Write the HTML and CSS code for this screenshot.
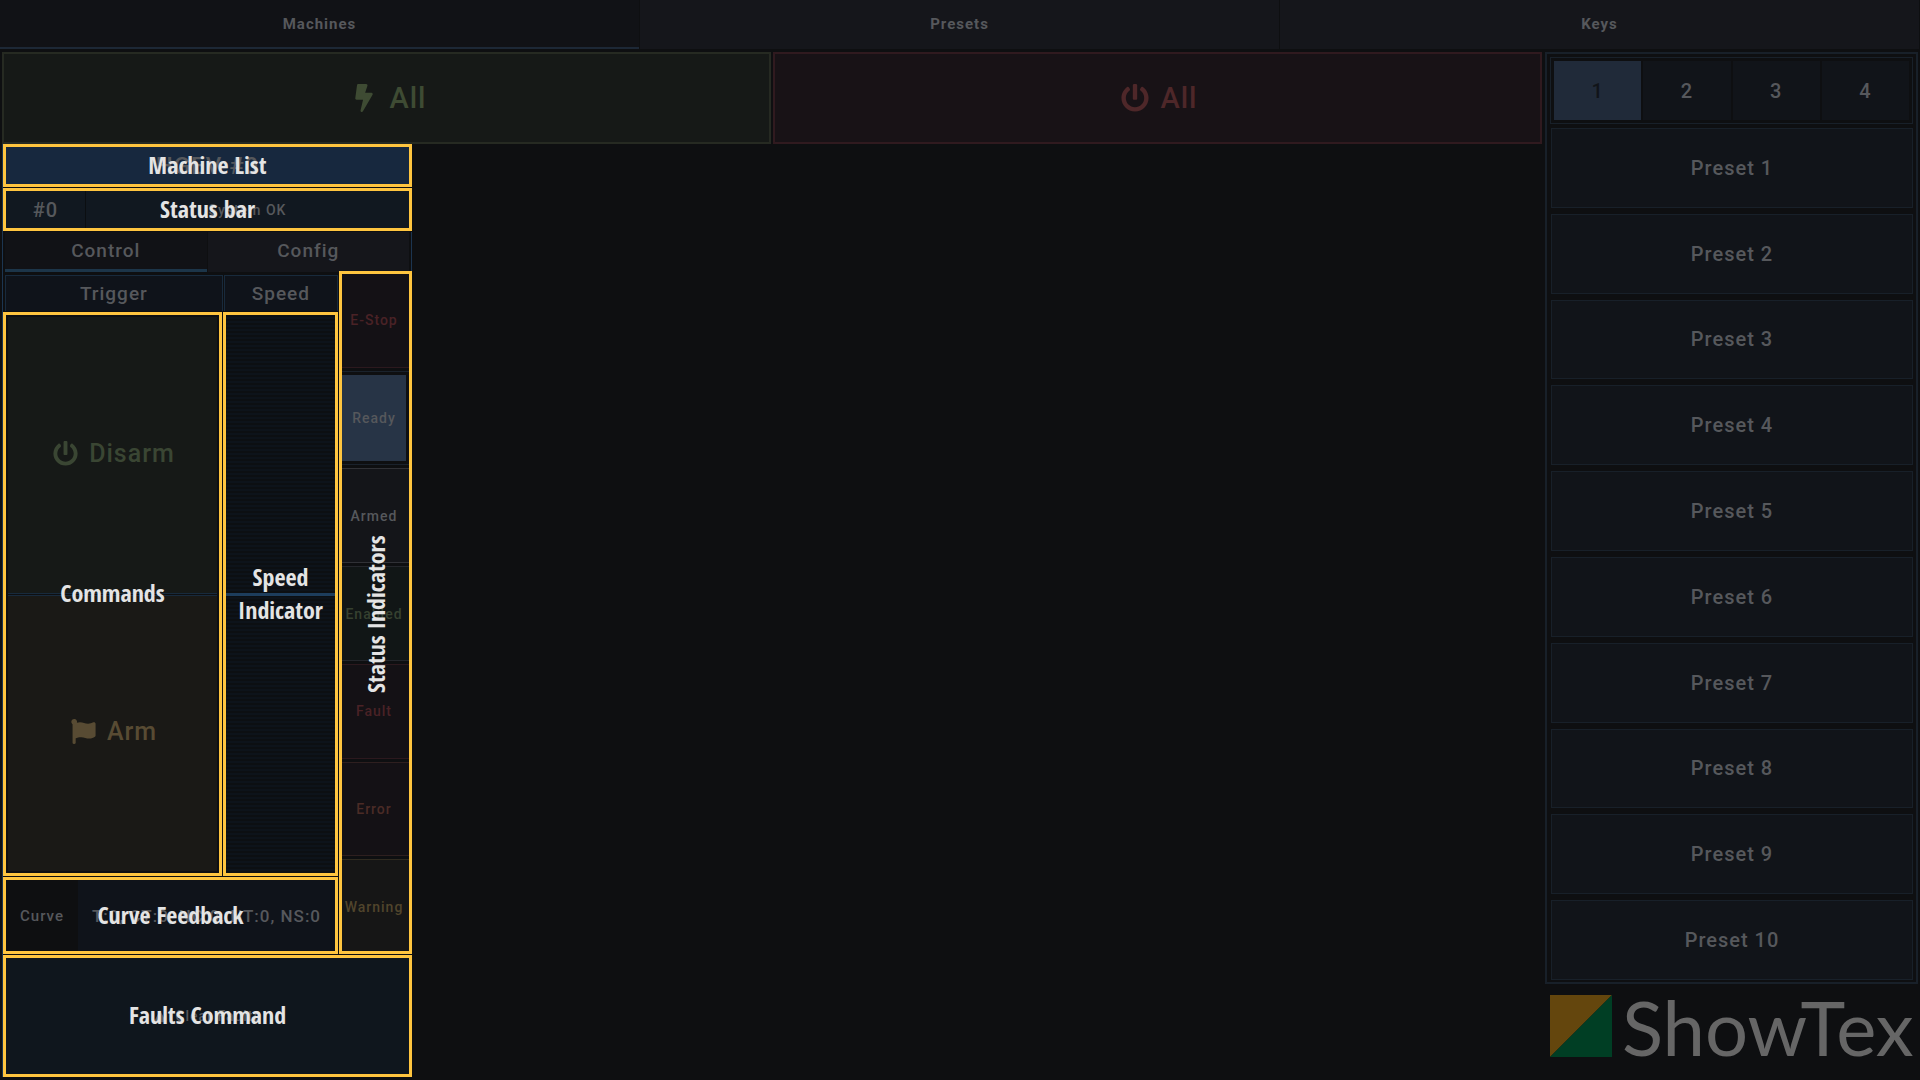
FILE: index.html
```html
<!DOCTYPE html>
<html lang="en">
<head>
    <meta charset="UTF-8">
    <meta name="viewport" content="width=device-width, initial-scale=1.0">
    <title>Machines</title>
    <link rel="stylesheet" href="styles.css">
</head>
<body>
    <nav class="main-tabs">
        <button class="main-tab active">Machines</button>
        <button class="main-tab">Presets</button>
        <button class="main-tab">Keys</button>
    </nav>

    <div class="layout">
        <main class="machines">
            <div class="all-buttons">
                <button class="all-button enable-all">
                    <svg class="icon-bolt" viewBox="0 0 320 512"><path d="M296 160H180.600l42.600-129.800C227.200 15 215.700 0 200 0H56C44 0 33.800 8.900 32.200 20.800l-32 240C-1.700 275.200 9.500 288 24 288h118.700L96.600 482.500c-3.600 15.200 8 29.500 23.300 29.500 8.400 0 16.400-4.400 20.800-12l176-304c9.300-15.900-2.200-36-20.700-36z"/></svg>
                    All
                </button>
                <button class="all-button disable-all">
                    <svg class="icon" viewBox="0 0 512 512"><use href="#power"/></svg>
                    All
                </button>
            </div>

            <section class="machine">
                <div class="machine-name"><span>HGEV #0</span><span class="note">Machine List</span></div>
                <div class="status-bar">
                    <span class="machine-id">#0</span>
                    <span class="system-state">System OK</span>
                    <span class="note">Status bar</span>
                </div>
                <div class="machine-tabs">
                    <button class="machine-tab active">Control</button>
                    <button class="machine-tab">Config</button>
                </div>
                <div class="control">
                    <div class="control-main">
                        <div class="control-heads">
                            <div class="control-head">Trigger</div>
                            <div class="control-head">Speed</div>
                        </div>
                        <div class="control-body">
                            <div class="commands">
                                <button class="command disarm">
                                    <svg class="icon" viewBox="0 0 512 512"><path id="power" d="M400 54.100c63 45 104 118.600 104 201.900 0 136.800-110.800 247.700-247.500 248C120 504.300 8.200 393 8 256.400 7.900 173.100 48.900 99.300 111.800 54.200c11.700-8.300 28-4.800 35 7.700L162.600 90c5.900 10.500 3.100 23.800-6.600 31-41.500 30.800-68 79.600-68 134.900-.1 92.300 74.500 168.100 168 168.100 91.600 0 168.600-74.200 168-169.100-.3-51.800-24.700-101.800-68.100-134-9.700-7.200-12.400-20.500-6.500-30.900l15.800-28.100c7-12.400 23.200-16.100 34.800-7.800zM296 264V24c0-13.300-10.700-24-24-24h-32c-13.300 0-24 10.700-24 24v240c0 13.300 10.700 24 24 24h32c13.300 0 24-10.700 24-24z"/></svg>
                                    Disarm
                                </button>
                                <button class="command arm">
                                    <svg class="icon" viewBox="0 0 512 512"><path d="M349.600 94.900C289 94.900 245 65.800 183.100 65.800c-23 0-43.500 4-62.500 10.900a56 56 0 0 0 2.200-28.300C118.600 24.300 98.700 4.700 74.400.8 38.200-5.100 7 22.800 7 58c0 20.700 9.500 37.200 25 47.400V488c0 13.300 10.700 24 24 24h16c13.300 0 24-10.700 24-24v-94.400c28.300-12.100 63.600-22.100 114.400-22.100 60.600 0 104.600 29.200 166.500 29.200 44.300 0 79.600-15 112.500-37.500a32 32 0 0 0 14.100-26.700V96c0-23.400-24.200-38.700-45.500-28.900-34.400 16-68.700 27.800-108.400 27.800z"/></svg>
                                    Arm
                                </button>
                                <span class="note">Commands</span>
                            </div>
                            <div class="speed"><span class="note">Speed Indicator</span></div>
                        </div>
                        <div class="curve">
                            <span class="curve-label">Curve</span>
                            <span class="curve-value">T:0, CT:0, NC:0, NT:0, NS:0</span>
                            <span class="note">Curve Feedback</span>
                        </div>
                    </div>
                    <div class="indicators">
                        <div class="indicator estop">E-Stop</div>
                        <div class="indicator ready">Ready</div>
                        <div class="indicator armed">Armed</div>
                        <div class="indicator enabled">Enabled</div>
                        <div class="indicator fault">Fault</div>
                        <div class="indicator error">Error</div>
                        <div class="indicator warning">Warning</div>
                        <span class="note note-vertical">Status Indicators</span>
                    </div>
                </div>
                <button class="faults">
                    <svg class="icon-small" viewBox="0 0 16 16"><path d="M8 1l7 14H1z"/></svg>
                    Clear Faults
                    <span class="note">Faults Command</span>
                </button>
            </section>
        </main>

        <aside class="sidebar">
            <div class="presets">
                <div class="pages">
                    <button class="page active">1</button>
                    <button class="page">2</button>
                    <button class="page">3</button>
                    <button class="page">4</button>
                </div>
                <div class="preset-list">
                    <button class="preset">Preset 1</button>
                    <button class="preset">Preset 2</button>
                    <button class="preset">Preset 3</button>
                    <button class="preset">Preset 4</button>
                    <button class="preset">Preset 5</button>
                    <button class="preset">Preset 6</button>
                    <button class="preset">Preset 7</button>
                    <button class="preset">Preset 8</button>
                    <button class="preset">Preset 9</button>
                    <button class="preset">Preset 10</button>
                </div>
            </div>
            <div class="brand">
                <svg class="brand-mark" viewBox="0 0 62 62"><path fill="#64460d" d="M0 0h62L0 62z"/><path fill="#003e24" d="M62 0v62H0z"/></svg>
                <span class="brand-name">ShowTex</span>
            </div>
        </aside>
    </div>
</body>
</html>
```
FILE: styles.css
```css
* {
    box-sizing: border-box;
}

body {
    margin: 0;
    height: 100vh;
    display: flex;
    flex-direction: column;
    background-color: #0e0f11;
    color: #56585c;
    font-family: Roboto, sans-serif;
    font-weight: 500;
    letter-spacing: 1px;
    overflow: hidden;
}

button {
    margin: 0;
    padding: 0;
    border: none;
    background: none;
    color: inherit;
    font: inherit;
    letter-spacing: inherit;
    cursor: pointer;
}

svg {
    fill: currentColor;
    flex: none;
}

.icon {
    width: 25px;
    height: 25px;
}

.icon-bolt {
    width: 28px;
    height: 28px;
}

.icon-small {
    width: 14px;
    height: 14px;
}

/* Top tabs */
.main-tabs {
    display: flex;
    gap: 1px;
    height: 49px;
    flex: none;
    padding-right: 1px;
}

.main-tab {
    flex: 1;
    background-color: #15161b;
    border-bottom: 2px solid #15161b;
    font-size: 15px;
    font-weight: 700;
}

.main-tab.active {
    background-color: #111216;
    border-bottom-color: #1d2836;
}

.layout {
    flex: 1;
    min-height: 0;
    display: flex;
    gap: 3px;
    padding: 3px 2px;
}

.machines {
    flex: 1;
    display: flex;
    flex-direction: column;
}

.all-buttons {
    display: flex;
    gap: 2px;
    height: 92px;
    flex: none;
}

.all-button {
    flex: 1;
    display: flex;
    align-items: center;
    justify-content: center;
    gap: 11px;
    padding-left: 4px;
    font-size: 29px;
}

.enable-all {
    background-color: #161917;
    border: 2px solid #262a22;
    color: #3e4b33;
}

.disable-all {
    background-color: #181216;
    border: 2px solid #301a1f;
    color: #4e2729;
}

.disable-all .icon {
    width: 28px;
    height: 28px;
}

/* Machine */
.machine {
    flex: 1;
    min-height: 0;
    width: 27%;
    max-width: 410px;
    display: flex;
    flex-direction: column;
    gap: 1px;
    border-left: 1px solid #1c3550;
}

.machine-name,
.status-bar,
.commands,
.speed,
.curve,
.faults {
    position: relative;
    border: 3px solid #ffc53f;
}

/* Labels laid over the machine panel */
.note {
    position: absolute;
    inset: 0;
    display: flex;
    align-items: center;
    justify-content: center;
    padding-bottom: 3px;
    text-align: center;
    font-family: "Open Sans Condensed", "Liberation Sans Narrow", "DejaVu Sans Condensed", sans-serif;
    font-weight: 700;
    font-size: 24px;
    line-height: 33px;
    letter-spacing: 0;
    color: #e4e4e4;
}

.note-vertical {
    writing-mode: vertical-rl;
    transform: rotate(180deg);
    white-space: nowrap;
}

.machine-name,
.status-bar {
    height: 43px;
    flex: none;
    display: flex;
    align-items: center;
    font-size: 20px;
}

.machine-name {
    justify-content: center;
    background-color: #17283e;
    font-size: 24px;
}

.status-bar {
    background-color: #111820;
}

.machine-id {
    width: 80px;
    align-self: stretch;
    display: flex;
    align-items: center;
    justify-content: center;
    border-right: 1px solid #0b0e11;
}

.system-state {
    flex: 1;
    text-align: center;
    font-size: 14px;
}

.machine-tabs {
    display: flex;
    gap: 1px;
    height: 40px;
    flex: none;
    padding: 0 2px;
    margin-bottom: -2px;
    border-right: 1px solid #1c3550;
}

.machine-tab {
    flex: 1;
    background-color: #15161b;
    border-bottom: 3px solid #15161b;
    font-size: 19px;
}

.machine-tab.active {
    background-color: #111216;
    border-bottom-color: #1c3549;
}

.control {
    position: relative;
    flex: 1;
    min-height: 0;
    display: flex;
    gap: 1px;
}

.control-main {
    flex: 1;
    min-width: 0;
    display: flex;
    flex-direction: column;
    gap: 1px;
}

.control-heads,
.control-body {
    display: grid;
    grid-template-columns: 219fr 115fr;
    gap: 1px;
}

.control-heads {
    height: 40px;
    padding: 4px 0 0 2px;
}

.control-head {
    display: flex;
    align-items: center;
    justify-content: center;
    background-color: #0f131a;
    border: 1px solid #182a3c;
    border-bottom: none;
    font-size: 19px;
}

.control-body {
    flex: 1;
}

.commands {
    display: flex;
    flex-direction: column;
    gap: 1px;
    padding: 2px;
}

.command {
    flex: 1;
    display: flex;
    align-items: center;
    justify-content: center;
    gap: 11px;
    padding: 0 0 3px 3px;
    font-size: 25px;
}

.disarm {
    background-color: #161917;
    border-bottom: 1px solid #182a3c;
    color: #3a4633;
}

.arm {
    background-color: #1a1916;
    border-top: 1px solid #182a3c;
    color: #584b33;
}

.speed {
    background: linear-gradient(#1d3d5c, #1d3d5c) center / 100% 3px no-repeat,
        repeating-linear-gradient(#0c0f12 0 2px, #0d131a 2px 4px);
}

.curve {
    display: flex;
    align-items: center;
    height: 77px;
}

.curve-label {
    width: 72px;
    flex: none;
    text-align: center;
    font-size: 15px;
}

.curve-value {
    flex: 1;
    align-self: stretch;
    display: flex;
    align-items: center;
    justify-content: center;
    background-color: #0f131a;
    font-size: 17px;
    white-space: nowrap;
}

/* Status indicators */
.indicators {
    position: relative;
    width: 73px;
    flex: none;
    display: flex;
    flex-direction: column;
    gap: 3px;
    padding: 2px 3px 0 0;
    outline: 3px solid #ffc53f;
    outline-offset: -3px;
    font-size: 14px;
}

.indicator {
    flex: 1;
    display: flex;
    align-items: center;
    justify-content: center;
    border: 1px solid #24262b;
    border-width: 1px 0;
}

.indicator.estop,
.indicator.fault {
    background-color: #141115;
    border-color: #2c191e;
    color: #4a2226;
}

.indicator.ready {
    background-color: #273446;
    border-color: #1a222c;
    box-shadow: inset 0 0 0 3px #0e0f11;
}

.indicator.armed {
    background-color: #141519;
    border-color: #303136;
}

.indicator.enabled {
    background-color: #111616;
    color: #364130;
}

.indicator.error {
    background-color: #141115;
    border-color: #2e1f1f;
    color: #4b2b26;
}

.indicator.warning {
    background-color: #161616;
    border-color: #302b20;
    color: #51452c;
}

.faults {
    height: 122px;
    flex: none;
    display: flex;
    align-items: center;
    justify-content: center;
    gap: 8px;
    background-color: #0f161d;
    font-size: 14px;
}

/* Sidebar */
.sidebar {
    width: 373px;
    flex: none;
    display: flex;
    flex-direction: column;
}

.presets {
    flex: 1;
    display: flex;
    flex-direction: column;
    gap: 4px;
    padding: 3px 3px 2px;
    border: 2px solid #182029;
}

.pages {
    display: flex;
    gap: 2px;
    height: 67px;
    padding: 3px;
    border: 1px solid #182029;
}

.page {
    flex: 1;
    background-color: #111419;
    font-size: 20px;
}

.page.active {
    background-color: #202a39;
    color: #111419;
}

.preset-list {
    flex: 1;
    display: flex;
    flex-direction: column;
    gap: 6px;
    padding-left: 1px;
}

.preset {
    flex: 1;
    background-color: #111419;
    border: 1px solid #182029;
    font-size: 20px;
}

.brand {
    display: flex;
    gap: 10px;
    height: 93px;
    padding: 11px 5px 0;
}

.brand-mark {
    width: 62px;
    height: 62px;
}

.brand-name {
    font-family: Lato, sans-serif;
    font-weight: 400;
    font-size: 76px;
    line-height: 64px;
    letter-spacing: 0;
    color: #666;
}
```
